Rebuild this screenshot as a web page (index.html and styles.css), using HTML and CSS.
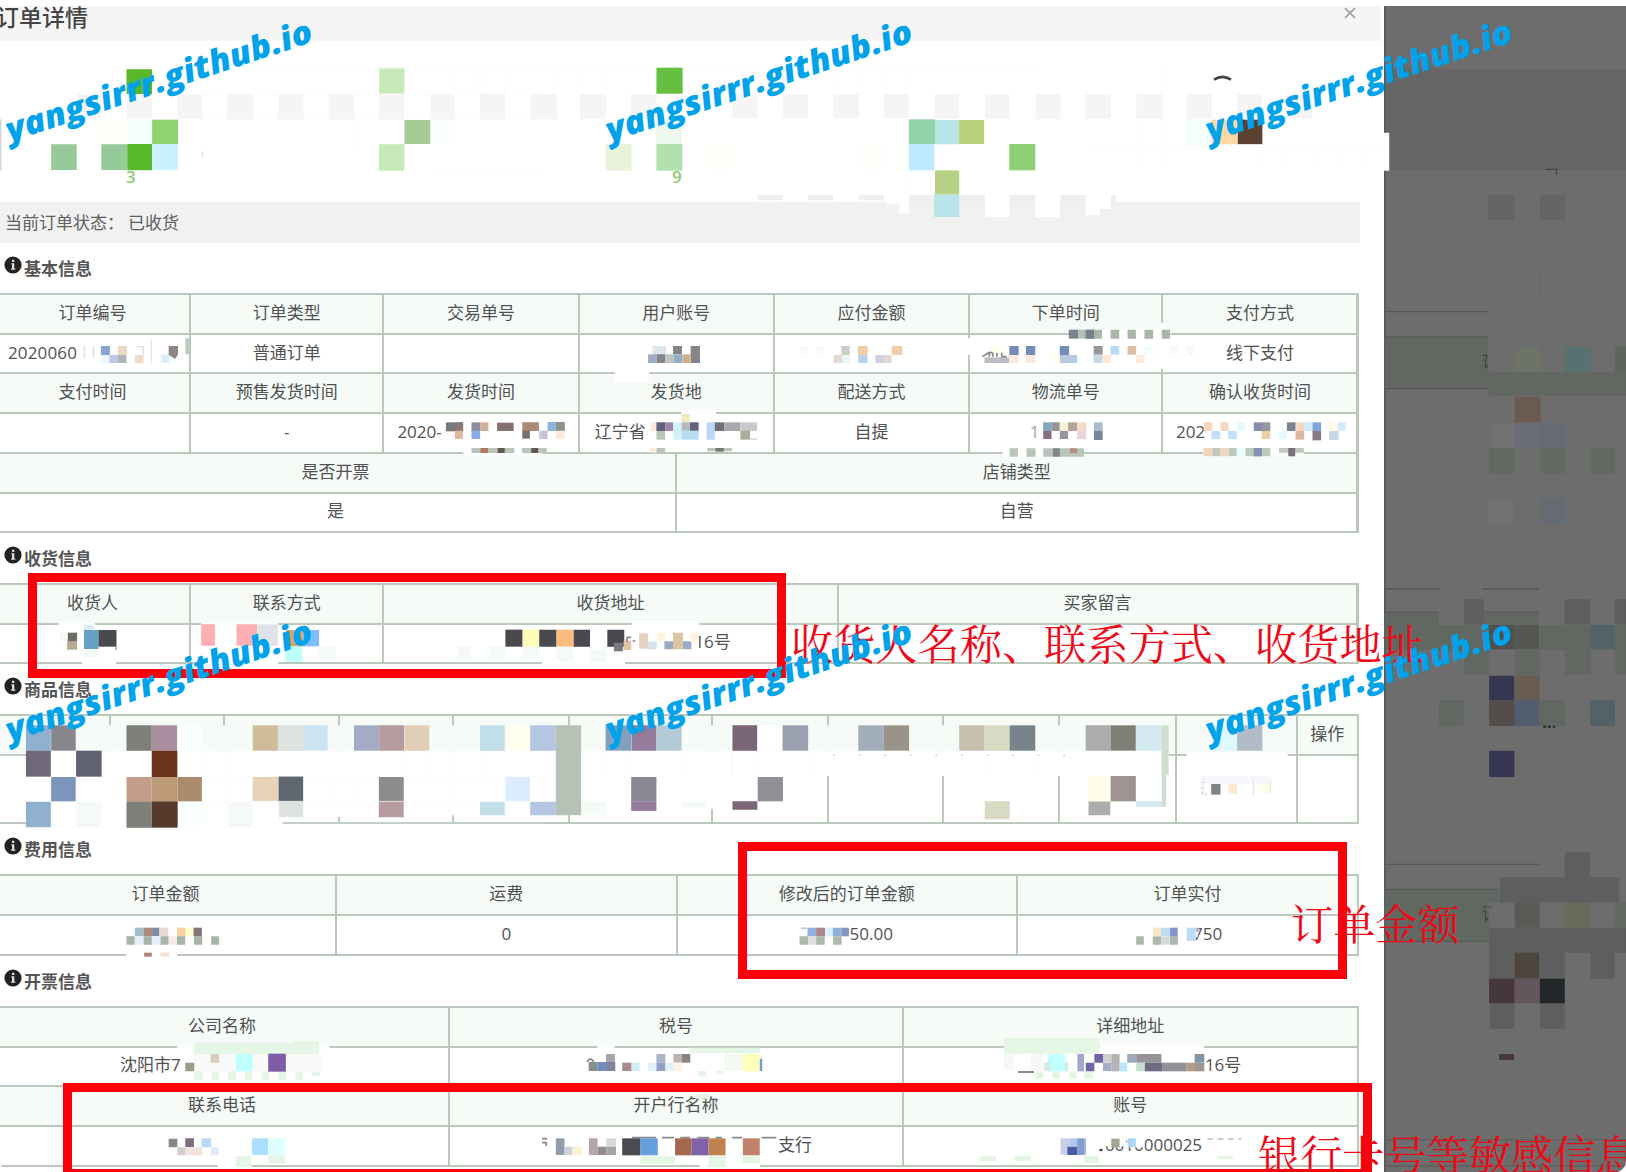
FILE: index.html
```html
<!DOCTYPE html>
<html lang="zh-CN">
<head>
<meta charset="utf-8">
<title>订单详情</title>
<link rel="stylesheet" href="styles.css">
</head>
<body>
<svg class="defs" width="0" height="0"><symbol id="info" viewBox="0 0 18 18"><circle cx="9" cy="9" r="8.6" fill="#222"/><path d="M7.3 7.3h3v5.2h1v1.3H7v-1.3h1V8.6h-.7zM8 3.8h2.3v2.2H8z" fill="#ddd"/></symbol></svg>
<div class="screen">
<main class="modal">
  <header class="modal-head"><h1>订单详情</h1><svg class="close" viewBox="0 0 12 12"><path d="M1 1l10 10M11 1L1 11" stroke="#999" stroke-width="1.7"/></svg></header>
  <div class="steps"><span class="step s1">3</span><span class="step s2">9</span></div>
  <div class="status"><span>当前订单状态：</span><span>已收货</span></div>

  <h2><svg><use href="#info"/></svg>基本信息</h2>
  <div class="grid basic">
    <b>订单编号</b><b>订单类型</b><b>交易单号</b><b>用户账号</b><b>应付金额</b><b>下单时间</b><b>支付方式</b>
    <i class="l p-no">2020060</i><i>普通订单</i><i></i><i></i><i></i><i></i><i>线下支付</i>
    <b>支付时间</b><b>预售发货时间</b><b>发货时间</b><b>发货地</b><b>配送方式</b><b>物流单号</b><b>确认收货时间</b>
    <i></i><i>-</i><i class="l p-send">2020-</i><i class="l p-from">辽宁省</i><i>自提</i><i class="l p-ship">1</i><i class="l p-recv">202</i>
  </div>
  <div class="grid extra"><b>是否开票</b><b>店铺类型</b><i>是</i><i>自营</i></div>

  <h2><svg><use href="#info"/></svg>收货信息</h2>
  <div class="grid receive">
    <b>收货人</b><b>联系方式</b><b>收货地址</b><b>买家留言</b>
    <i></i><i></i><i class="l p-addr">16号</i><i></i>
  </div>

  <h2><svg><use href="#info"/></svg>商品信息</h2>
  <div class="grid goods">
    <b></b><b></b><b></b><b></b><b></b><b></b><b></b><b></b><b></b><b></b><b></b><b>操作</b>
    <i></i><i></i><i></i><i></i><i></i><i></i><i></i><i></i><i></i><i></i><i></i><i></i>
  </div>

  <h2><svg><use href="#info"/></svg>费用信息</h2>
  <div class="grid fee">
    <b>订单金额</b><b>运费</b><b>修改后的订单金额</b><b>订单实付</b>
    <i></i><i>0</i><i class="l p-amount">50.00</i><i class="l p-paid">750</i>
  </div>

  <h2><svg><use href="#info"/></svg>开票信息</h2>
  <div class="grid invoice">
    <b>公司名称</b><b>税号</b><b>详细地址</b>
    <i class="l p-city">沈阳市7</i><i></i><i class="l p-full">16号</i>
    <b>联系电话</b><b>开户行名称</b><b>账号</b>
    <i></i><i class="l p-bank">支行</i><i class="l p-acct">0010000025</i>
  </div>
</main>
<aside class="backdrop"></aside>

<svg class="layer" viewBox="0 0 1626 1172" preserveAspectRatio="none">
<!-- progress steps, left -->
<g transform="scale(.34566 .33333)">
<path fill="#d4d4d4" d="M0 358h4v154H0z"/>
<path fill="#f5f5f5" d="M222 282h72v76h-72zM366 282h74v76h-74zM512 282h72v76h-72zM658 282h75v76h-75zM805 282h73v76h-73zM951 282h73v76h-73zM1097 282h72v76h-72zM1245 282h70v76h-70zM1389 282h73v76h-73zM1534 282h76v76h-76z"/>
<path fill="#57b82c" d="M366 208h74v74h-74zM368 432h72v79h-72z"/>
<path fill="#90d36e" d="M440 359h75v73h-75z"/><path fill="#96ca98" d="M148 433h74v77h-74zM293 433h75v77h-75z"/>
<path fill="#ccf1fe" d="M440 432h75v79h-75z"/><path fill="#f5fffe" d="M368 359h72v73h-72z"/><path fill="#fffef8" d="M295 359h72v73h-72z"/>
<path fill="#c7e9b7" d="M1097 203h73v78h-73zM1096 433h74v79h-74z"/><path fill="#a7cb95" d="M1170 360h75v72h-75z"/><path fill="#f9feff" d="M1246 360h69v72h-69z"/>
<path fill="#d9f2cc" d="M583 455h5v20h-5z"/>
<path fill="none" stroke="#f9f9f9" stroke-width="2" d="M586 206H1568M586 282H1568M586 358H1568M1026 359v95M1245 508H1568M1315 206v76M1389 206v76M1462 206v76"/>
</g>
<!-- progress steps, middle -->
<g transform="translate(542 0) scale(.34566 .33333)">
<path fill="#f5f5f5" d="M110 282h76v76h-76zM258 282h73v76h-73zM550 282h73v73h-73zM697 282h72v73h-72zM842 282h75v73h-75zM989 282h72v73h-72zM1135 282h72v76h-72zM1282 282h71v76h-71zM1428 282h72v76h-72zM0 282h42v76H0z"/>
<path fill="#67bf41" d="M331 203h76v78h-76z"/><path fill="#edf9ee" d="M331 358h74v74h-74z"/><path fill="#b1e2ad" d="M331 432h75v80h-75z"/><path fill="#e9f3dc" d="M184 432h75v80h-75z"/><path fill="#fffffa" d="M477 432h73v78h-73zM918 432h70v78h-70z"/>
<path fill="#90d4a8" d="M1061 358h76v75h-76z"/><path fill="#b9e5ea" d="M1137 360h69v73h-69z"/><path fill="#bbd27c" d="M1206 360h73v72h-73z"/><path fill="#bee9fe" d="M1061 433h74v78h-74z"/><path fill="#8ed073" d="M1352 432h75v79h-75z"/>
<path fill="#efefef" d="M623 585h74v16h-74zM770 585h73v16h-73zM916 585h73v16h-73zM1061 585h220v40h-220zM1353 585h75v40h-75zM1500 585h76v40h-76z"/>
<path fill="#fff" d="M995 602h39v11h-39zM1034 600h27v39h-27zM1282 585h70v67h-70zM1428 585h70v67h-70z"/>
<path fill="#b7d285" d="M1137 511h70v73h-70z"/><path fill="#b9e5ea" d="M1134 584h73v67h-73z"/>
<path fill="none" stroke="#fafafa" stroke-width="2" d="M0 206H331M407 206H1440M42 206v76M110 206v76M186 206v76M842 206v76M915 206v76M988 206v76M1061 206v76M1061 511v74"/>
</g>
<!-- progress steps, right -->
<g transform="translate(1084 0) scale(.34566 .33333)">
<path fill="#f5f5f5" d="M5 282h73v76H5zM151 282h75v76h-75zM297 282h73v76h-73zM443 282h72v76h-72zM588 282h73v74h-73z"/>
<path fill="#f2fffb" d="M296 359h74v74h-74z"/><path fill="#ffd8a5" d="M370 359h75v74h-75z"/><path fill="#5a402e" d="M445 359h71v74h-71z"/>
<path d="M376 239q25-17 49 0" fill="none" stroke="#444" stroke-width="8"/>
<path fill="#fff" d="M5 585h73v42H45v18H5zM864 398h19v114h-19z"/>
<path fill="#efefef" d="M78 585h14v24H78z"/>
<path fill="none" stroke="#f9f9f9" stroke-width="2" d="M5 434H864M151 282v228M226 206v304M515 433v75M588 433v75M661 433v75M733 433v75M806 433v75"/>
<path fill="#646464" d="M1170 585h74v76h-74zM1320 585h72v76h-72z"/>
<path fill="none" stroke="#6a6a6a" stroke-width="2" d="M1170 737h150M1246 585v300M1200 815h120v75"/>
<path fill="none" stroke="#445" stroke-width="4" d="M1335 508h30M1367 505v20"/>
</g>
<!-- basic info, left -->
<g transform="translate(0 290) scale(.34566 .33333)">
<path fill="#fff" d="M222 145h325v80H222z"/><path fill="#dcdee1" d="M242 168h4v36h-4zM268 168h4v36h-4zM396 168h20v4h-20zM412 168h4v28h-4zM436 150h3v70h-3z"/>
<path fill="#8aa2cf" d="M292 168h26v27h-26z"/><path fill="#bcc8e4" d="M316 195h25v24h-25z"/><path fill="#b2b3c0" d="M341 195h25v24h-25z"/><path fill="#e9d9c2" d="M341 168h26v27h-26z"/><path fill="#eddaca" d="M390 195h25v24h-25z"/><path fill="#dbeffe" d="M466 193h24v25h-24z"/><path fill="#8d8581" d="M488 168h27v25l-8 14-19-12z"/><path fill="#eaf8fa" d="M292 195h24v24h-24z"/><path fill="#bdcbbf" d="M536 145h12v48h-12z"/>
<path fill="#fff" d="M1290 395h278v102h-228v-20h-50z"/>
<path fill="#767d78" d="M1290 397h50v27h-50z"/><path fill="#8c7676" d="M1316 397h22v27h-22z"/><path fill="#dfb79b" d="M1316 422h23v25h-23z"/>
<path fill="#8a8fa0" d="M1364 397h26v26h-26z"/><path fill="#d0b09b" d="M1390 397h23v26h-23z"/><path fill="#85ade0" d="M1364 422h25v25h-25z"/><path fill="#866f72" d="M1438 398h48v25h-48z"/><path fill="#ab8b78" d="M1511 397h28v26h-28zM1539 397h20v26h-20z"/><path fill="#766e72" d="M1511 422h22v24h-22z"/><path fill="#c9d0d8" d="M1559 422h9v26h-9z"/>
<path fill="#b9c5ba" d="M1364 474h124v15h-124zM1510 474h58v15h-58z"/><path fill="#b4795e" d="M1390 474h22v15h-22z"/><path fill="#635754" d="M1440 474h20v15h-20zM1537 474h20v15h-20z"/>
</g>
<!-- basic info, middle -->
<g transform="translate(542 290) scale(.34566 .33333)">
<path fill="#fff" d="M210 244h100v33H210zM1226 145h18v50h-18zM403 362h100v20H403z"/>
<path fill="#dbe7ea" d="M320 168h39v27h-39z"/><path fill="#9eabc9" d="M307 193h25v26h-25z"/><path fill="#858489" d="M332 193h25v26h-25zM379 168h26v25h-26zM430 168h27v51h-27z"/><path fill="#bcc7c0" d="M357 193h23v26h-23z"/><path fill="#95b1bf" d="M380 193h26v26h-26z"/><path fill="#ceb08e" d="M406 193h24v26h-24z"/>
<path fill="#c8cfc6" d="M866 168h24v27h-24z"/><path fill="#e4d6d1" d="M844 195h24v24h-24zM989 195h22v24h-22z"/><path fill="#ebf5f7" d="M868 195h24v24h-24z"/><path fill="#f1ceaa" d="M914 168h28v27h-28zM1012 168h30v27h-30z"/><path fill="#b9d2f0" d="M915 195h27v24h-27z"/><path fill="#d1d0de" d="M964 195h25v24h-25z"/><path fill="#f7faf7" d="M748 168h20v26h-20zM795 168h22v26h-22z"/>
<path fill="#b9bec5" d="M1280 202h71v17h-71z"/><path fill="none" d="M1274 200l22-14M1294 200v-12h10v12M1316 188v12M1330 188v12h14" stroke="#888" stroke-width="5"/><path fill="#758bb8" d="M1352 168h27v27h-27zM1400 168h27v27h-27zM1498 168h27v27h-27z"/><path fill="#f9eadd" d="M1352 195h27v24h-27zM1400 195h27v24h-27z"/><path fill="#b5cae0" d="M1498 195h50v24h-50z"/><path fill="#ffffe9" d="M1304 168h24v20h-24zM1475 193h23v26h-23z"/>
<path fill="#7b838f" d="M1524 119h27v27h-27z"/><path fill="#b6c1b6" d="M1551 119h17v27h-17z"/>
<path fill="#8cb4dc" d="M16 396h24v27H16z"/><path fill="#8e918a" d="M40 396h26v27H40z"/><path fill="#c0bfd6" d="M0 422h16v25H0z"/><path fill="#ffe9d9" d="M40 422h26v25H40zM314 397h17v26h-17z"/>
<path fill="#efe8bb" d="M404 372h23v26h-23z"/><path fill="#62607b" d="M331 397h26v26h-26zM428 397h25v26h-25z"/><path fill="#a086a5" d="M357 397h23v26h-23z"/><path fill="#b9c6b8" d="M331 423h25v26h-25z"/><path fill="#d2f2fb" d="M380 397h24v52h-24z"/><path fill="#b8b8bc" d="M404 397h24v25h-24z"/><path fill="#b4dcf3" d="M404 422h49v27h-49z"/><path fill="#b9d8fa" d="M476 397h24v52h-24z"/><path fill="#706f77" d="M500 397h27v26h-27z"/><path fill="#a8a9af" d="M527 397h47v26h-47z"/><path fill="#c9c8ca" d="M574 397h48v26h-48z"/><path fill="#abad9d" d="M574 422h28v27h-28z"/><path fill="#d9d9d9" d="M602 445h20v5h-20z"/>
<path fill="#b9c5ba" d="M0 474h14v14H0zM478 474h72v10h-72zM331 474h25v13h-25z"/><path fill="#fcebdd" d="M312 474h19v14h-19z"/><path fill="#7b777e" d="M502 474h24v11h-24z"/>
<path fill="#82a4bd" d="M1450 397h24v26h-24z"/><path fill="#97959c" d="M1474 397h24v26h-24zM1498 423h24v24h-24z"/><path fill="#f7f4d5" d="M1498 397h24v26h-24z"/><path fill="#b6a39a" d="M1522 397h26v26h-26z"/><path fill="#f5dbcb" d="M1548 397h20v26h-20z"/><path fill="#84707c" d="M1450 423h24v24h-24z"/><path fill="#e7d4d7" d="M1548 423h20v24h-20z"/>
<path fill="#fff" d="M1332 472h236v28h-236z"/><path fill="#b9c5ba" d="M1353 475h24v25h-24zM1402 475h26v25h-26zM1450 475h118v25h-118z"/><path fill="#82858a" d="M1478 475h20v25h-20z"/><path fill="#b68e7e" d="M1528 475h20v14h-20z"/>
</g>
<!-- basic info, right and backdrop -->
<g transform="translate(1084 290) scale(.34566 .33333)">
<path fill="#fff" d="M0 118h250v27H0zM220 98h16v138h-16z"/><path fill="#a8b6a7" d="M0 119h52v27H0zM77 119h25v27H77zM126 119h24v27h-24zM175 119h25v27h-25zM225 119h24v27h-24z"/><path fill="#76818f" d="M5 119h24v27H5z"/>
<path fill="#97969d" d="M28 168h26v26H28z"/><path fill="#c8d8e4" d="M28 194h26v25H28z"/><path fill="#b7dbfb" d="M77 168h25v26H77z"/><path fill="#debea6" d="M126 168h25v26h-25z"/><path fill="#fbebda" d="M151 194h24v25h-24zM54 194h24v25H54z"/><path fill="#effefe" d="M175 168h25v26h-25z"/><path fill="#f8f8f8" d="M248 168h22v26h-22zM297 168h20v26h-20z"/>
<path fill="#a9bdd0" d="M29 397h25v26H29z"/><path fill="#75869a" d="M29 423h25v27H29z"/><path fill="#f1d6c7" d="M0 397h6v26H0z"/><path fill="#e7d4d7" d="M0 423h6v25H0z"/>
<path fill="#f5d7c2" d="M346 397h25v26h-25zM395 397h23v26h-23zM614 397h23v26h-23z"/><path fill="#c3e0fb" d="M369 423h25v24h-25zM417 423h25v24h-25z"/><path fill="#e4fbfd" d="M443 397h22v26h-22zM564 423h22v24h-22z"/><path fill="#8390ac" d="M491 397h24v26h-24z"/><path fill="#97979d" d="M515 397h24v26h-24z"/><path fill="#edcda4" d="M514 423h25v24h-25z"/><path fill="#7f8193" d="M587 397h25v26h-25z"/><path fill="#dbb6a1" d="M612 423h25v26h-25z"/><path fill="#d0eafe" d="M637 397h24v26h-24zM735 397h22v26h-22z"/><path fill="#7da8d8" d="M661 397h25v26h-25z"/><path fill="#887984" d="M661 423h25v28h-25z"/><path fill="#fffbe7" d="M709 397h26v26h-26z"/><path fill="#cad8e5" d="M709 423h28v27h-28z"/>
<path fill="#fff" d="M345 474h290v26H345z"/><path fill="#bec9be" d="M371 474h24v25h-24zM418 474h24v25h-24zM467 474h72v25h-72zM564 474h72v14h-72z"/><path fill="#f1d5c1" d="M346 474h25v25h-25zM395 474h23v25h-23z"/><path fill="#8593b3" d="M491 474h24v25h-24z"/><path fill="#74717b" d="M591 474h20v25h-20z"/><path fill="#e6ffff" d="M443 474h22v25h-22z"/>
<path stroke="#585858" stroke-width="4" d="M870 65h300"/><path fill="#626861" d="M870 140h300v156H870zM1170 247h398v70h-398z"/><path stroke="#575b57" stroke-width="4" d="M870 141h300M870 296h300"/>
<path d="M1154 195l10 3M1154 210h8v24l7-8M1165 193v15" stroke="#3a3a3a" stroke-width="3" fill="none"/>
<path fill="#6d7367" d="M1246 170h74v76h-74z"/><path fill="#577170" d="M1391 170h75v76h-75z"/><path fill="#5f655e" d="M1536 170h32v76h-32z"/><path fill="#6a5a51" d="M1246 320h75v78h-75z"/><path fill="#6a6d75" d="M1246 398h75v76h-75z"/><path fill="#646b72" d="M1321 398h70v76h-70zM1320 624h71v76h-71z"/><path fill="#717171" d="M1172 398h74v76h-74zM1170 624h73v76h-73z"/><path fill="#626960" d="M1172 474h73v76h-73zM1320 474h71v76h-71zM1466 474h70v76h-70z"/>
<path stroke="#5b5b5b" stroke-width="4" d="M870 897h157M1153 897h163"/>
</g>
<!-- receiver and goods, left -->
<g transform="translate(0 580) scale(.34566 .33333)">
<path fill="#fff" d="M170 128h105v10H170zM238 245h98v10h-98z"/><path fill="#6f6b68" d="M196 158h27v27h-27z"/><path fill="#b6aa91" d="M194 185h29v24h-29z"/><path fill="#dbebf4" d="M243 135h28v15h-28z"/><path fill="#66a1c4" d="M243 150h42v57h-42z"/><path fill="#4a494f" d="M285 150h52v50h-52z"/><path fill="#f4f9f3" d="M174 155h20v27h-20zM243 209h42v23h-42z"/><path d="M336 200v10" stroke="#89b5cc" stroke-width="5"/>
<path fill="#fff" d="M582 128h223v130H582z"/><path fill="#ffafb3" d="M582 133h40v64h-40zM684 133h60v64h-60z"/><path fill="#e0e2eb" d="M744 133h60v64h-60z"/><path fill="#d7a468" d="M828 150h48v50h-48z"/><path fill="#82bdff" d="M876 150h47v49h-47z"/><path fill="#bffff9" d="M825 199h49v47h-49z"/><path fill="#f4faf5" d="M924 199h48v36h-48zM1326 198h37v36h-37zM1414 198h48v36h-48zM1512 198h48v36h-48z"/>
<path fill="#4a494f" d="M1462 149h50v51h-50z"/><path fill="#fffbb8" d="M1512 149h48v51h-48z"/><path fill="#4a494f" d="M1560 149h8v51h-8z"/>
<path fill="#fff" d="M75 512h1493v200H820v26H75z"/>
<path fill="#f6fbf7" d="M315 436h1253v76H315z"/>
<path stroke="#c3cec4" stroke-width="6" d="M0 525h75M818 729h750M981 712v17M1311 706v23"/>
<path fill="#8fb0ce" d="M75 436h72v76H75zM75 665h72v77H75z"/><path fill="#86868d" d="M148 436h71v76h-71z"/><path fill="#706878" d="M75 512h72v78H75z"/><path fill="#606273" d="M220 512h74v78h-74z"/><path fill="#7c95bd" d="M148 591h71v73h-71z"/><path fill="#f6faf6" d="M220 665h73v76h-73zM658 665h73v76h-73z"/>
<path fill="#7e7f78" d="M366 436h73v76h-73zM366 664h73v79h-73z"/><path fill="#a88e9e" d="M439 436h74v76h-74z"/><path fill="#f9ffff" d="M513 436h70v76h-70zM514 664h70v76h-70z"/><path fill="#6b341b" d="M439 512h74v79h-74z"/><path fill="#c49e8a" d="M366 591h73v73h-73z"/><path fill="#bc9977" d="M439 591h75v73h-75z"/><path fill="#ab8b6c" d="M514 591h70v73h-70z"/><path fill="#563a2b" d="M439 664h75v79h-75z"/>
<path fill="#cdbb99" d="M731 436h73v76h-73z"/><path fill="#dee2df" d="M804 436h75v76h-75zM807 664h70v48h-70z"/><path fill="#cce4f2" d="M879 436h69v76h-69z"/><path fill="#e7d3b8" d="M731 591h75v73h-75z"/><path fill="#5e666f" d="M806 588h71v76h-71z"/>
<path fill="#a2acc5" d="M1024 436h73v76h-73z"/><path fill="#b69ca0" d="M1097 436h72v76h-72zM1096 664h72v48h-72z"/><path fill="#e1ceb6" d="M1170 436h72v76h-72z"/><path fill="#8b8c8e" d="M1096 591h72v73h-72z"/><path fill="#c2dee9" d="M1389 436h71v76h-71zM1389 665h71v41h-71z"/><path fill="#fffeef" d="M1462 436h71v76h-71z"/><path fill="#b5c6e2" d="M1534 436h34v76h-34zM1534 665h34v41h-34z"/><path fill="#dcecff" d="M1462 591h71v73h-71z"/>
<path stroke="#f7faf8" stroke-width="2" fill="none" d="M586 512v78M658 512v150M950 590v74M1024 590v74M1168 512v78M1243 512v78M1311 512v152M1389 512v78M586 589h982M586 664h982"/>
</g>
<!-- receiver and goods, middle -->
<g transform="translate(542 580) scale(.34566 .33333)">
<path fill="#fff" d="M0 244h240v10H0zM260 126h195v12H260z"/><path fill="#4a494f" d="M0 149h42v51H0zM91 149h48v51H91zM189 149h49v51h-49z"/><path fill="#fcbc7d" d="M42 149h49v51H42z"/><path fill="#f4faf5" d="M42 200h48v46H42zM140 207h48v40h-48z"/><path fill="#777a7c" d="M208 188h26v26h-26z"/><path fill="#dfc4a4" d="M236 182h22v28h-22zM379 158h29v50h-29z"/><path fill="#e4d1be" d="M281 160h26v46h-26z"/><path fill="#d7e1ef" d="M307 185h25v23h-25z"/><path fill="#9aabc5" d="M354 184h25v24h-25zM408 184h24v24h-24z"/><path fill="#fff5df" d="M332 158h25v26h-25zM429 160h25v25h-25z"/>
<path fill="none" stroke="#8a8a8a" stroke-width="5" d="M244 172h14M246 172v14M262 183h8"/>
<path fill="#fff" d="M0 512h1568v76H0zM480 588h20v98h-20z"/><path fill="#f6fbf7" d="M0 436h1568v76H0z"/>
<path fill="#b6c5e2" d="M0 436h40v76H0zM0 665h40v41H0z"/><path fill="#b6c2b5" d="M40 436h73v270H40z"/><path fill="#839fbe" d="M184 436h74v76h-74z"/><path fill="#967c9b" d="M259 436h72v76h-72zM258 664h73v29h-73z"/><path fill="#b3cbd6" d="M331 436h73v76h-73z"/><path fill="#898794" d="M258 591h73v73h-73z"/><path fill="#f5faf6" d="M113 665h72v41h-72zM406 665h70v20h-70z"/>
<path fill="#7a6676" d="M551 436h72v76h-72zM551 664h72v25h-72z"/><path fill="#fff" d="M623 436h73v76h-73z"/><path fill="#9aa0b0" d="M696 436h74v76h-74z"/><path fill="#909197" d="M624 591h73v73h-73z"/><path fill="#a1adb9" d="M915 436h74v76h-74z"/><path fill="#999389" d="M989 436h73v76h-73z"/><path fill="#c6bfae" d="M1207 436h73v76h-73z"/><path fill="#d8dac4" d="M1280 436h73v76h-73zM1281 664h72v54h-72z"/><path fill="#77848b" d="M1353 436h74v76h-74z"/>
<path stroke="#f7faf8" stroke-width="2" fill="none" d="M186 512v76M258 512v76M406 512v76M551 512v76M623 512v76M770 512v76M1280 512v76M1427 512v76"/><path stroke="#bdc9bd" stroke-width="4" stroke-dasharray="5 69" d="M842 526H1568"/>
</g>
<!-- goods, right and backdrop -->
<g transform="translate(1084 580) scale(.34566 .33333)">
<path fill="#fff" d="M0 510h245v76H0zM297 518h292v14H297z"/><path fill="#adacab" d="M5 436h72v76H5zM13 664h63v42H13z"/><path fill="#807f76" d="M77 436h73v76H77z"/><path fill="#d4e8f0" d="M150 436h74v76h-74zM151 664h81v17h-81z"/><path fill="#d0ddd0" d="M224 436h21v148h-21zM225 584h13v96h-13z"/><path fill="#fffeea" d="M13 588h64v76H13z"/><path fill="#9f9490" d="M77 588h73v76H77z"/><path fill="#f5faf7" d="M297 436h290v76H297z"/><path fill="#dff8ff" d="M370 436h73v76h-73z"/><path fill="#b0bdc8" d="M443 436h73v76h-73z"/>
<path fill="#7e8584" d="M368 612h27v32h-27z"/><path fill="#fbe8d1" d="M418 612h25v30h-25z"/><path fill="#ffffe9" d="M515 612h24v30h-24z"/><path fill="#f6f7fb" d="M345 588h195v23H345z"/><path fill="none" stroke="#bbb" stroke-width="4" stroke-dasharray="4 12" d="M341 605v38h26"/><path stroke="#dfe7e1" stroke-width="3" d="M345 588v57M490 600v45M540 600v40"/>
<path fill="#616761" d="M870 96h157v37H870zM1157 96h159v39h-159zM1027 135h145v75h-145zM1100 210h72v75h-72zM1246 210h72v75h-72zM1320 135h145v75h-145zM1391 210h74v75h-74zM1536 135h32v150h-32zM1027 360h71v78h-71zM1320 360h71v78h-71zM870 133h157v77H870z"/><path stroke="#595959" stroke-width="4" d="M870 26h157M1153 26h163M870 97h157M1157 97h159M870 853h446"/><path fill="#5e5e5e" d="M1100 58h57v75h-57zM1391 58h73v75h-73zM1536 58h32v75h-32zM1391 816h73v84h-73zM1208 892h340v8h-340z"/>
<path fill="#51504e" d="M1172 135h72v73h-72z"/><path fill="#555852" d="M1244 135h73v73h-73z"/><path fill="#526267" d="M1464 135h72v73h-72zM1464 360h72v78h-72z"/><path fill="#373650" d="M1172 287h73v73h-73zM1172 512h73v79h-73z"/><path fill="#685c53" d="M1246 287h72v73h-72z"/><path fill="#544d4c" d="M1172 360h74v78h-74z"/><path fill="#525d6d" d="M1246 360h72v78h-72z"/><path stroke="#2a2a2a" stroke-width="6" stroke-dasharray="9 5" d="M1328 440h36"/>
</g>
<!-- fees and invoice, left -->
<g transform="translate(0 872) scale(.34566 .33333)">
<path fill="#a2becb" d="M390 167h25v26h-25z"/><path fill="#af897b" d="M415 167h25v26h-25z"/><path fill="#7d8ba4" d="M440 167h21v26h-21z"/><path fill="#ead8d2" d="M462 167h25v26h-25z"/><path fill="#f8d0a1" d="M512 167h25v26h-25z"/><path fill="#fffec8" d="M537 167h22v26h-22z"/><path fill="#85747a" d="M560 167h24v26h-24z"/><path fill="#a6b5a7" d="M366 193h24v25h-24zM415 193h24v25h-24zM464 193h24v25h-24zM512 193h24v25h-24zM561 193h24v25h-24zM611 193h23v25h-23z"/><path fill="#e6effb" d="M390 193h25v25h-25zM440 193h24v25h-24z"/><path fill="#f6e9e4" d="M488 193h24v25h-24z"/><path fill="#fff" d="M366 242h147v14H366z"/><path fill="#b48073" d="M417 242h22v12h-22z"/><path fill="#f3e1d7" d="M464 242h26v12h-26z"/>
<path fill="#fff" d="M513 518h440v14H513z"/><path fill="#e5f5e6" d="M561 512h284v-5h78v39H561zM561 598h25v25h-25zM611 598h22v25h-22zM660 598h22v25h-22zM709 598h22v25h-22zM757 598h22v25h-22zM806 598h22v25h-22zM855 598h22v25h-22zM904 598h22v15h-22z"/><path fill="#f7faf7" d="M561 546h370v52H561z"/><path fill="#999e87" d="M536 572h26v26h-26z"/><path fill="#dacdb9" d="M609 546h25v26h-25z"/><path fill="#bfffff" d="M682 546h49v52h-49z"/><path fill="#7e5ca8" d="M776 545h51v54h-51z"/>
<path fill="#87888f" d="M488 800h25v26h-25z"/><path fill="#796e7a" d="M536 799h25v26h-25z"/><path fill="#d1cdd1" d="M513 826h24v24h-24z"/><path fill="#f3e2dc" d="M537 826h48v24h-48z"/><path fill="#bad9f8" d="M583 799h28v27h-28z"/><path fill="#e2eafa" d="M611 826h22v24h-22z"/><path fill="#abdeff" d="M729 799h47v50h-47z"/><path fill="#ddffff" d="M776 799h49v52h-49z"/><path fill="#fff" d="M630 851h98v36h-98z"/><path fill="#e6f5e5" d="M682 851h45v34h-45zM776 851h49v24h-49z"/>
</g>
<!-- fees and invoice, middle -->
<g transform="translate(542 872) scale(.34566 .33333)">
<path fill="#9da0a5" d="M750 167h18v3h-18z"/><path fill="#8fb1de" d="M768 167h25v26h-25zM840 167h26v26h-26z"/><path fill="#aa8689" d="M793 167h26v26h-26z"/><path fill="#d8f0fd" d="M819 167h22v26h-22z"/><path fill="#8498bd" d="M866 167h22v26h-22z"/><path fill="#adb9ad" d="M745 193h25v25h-25zM793 193h25v25h-25zM842 193h25v25h-25z"/><path fill="#e0dfdf" d="M770 193h23v25h-23z"/>
<path fill="#fff" d="M160 518h50v14h-50zM1336 518h232v14h-232z"/><path fill="#e5f6e5" d="M430 527h200v17H430zM1337 498h231v47h-231zM452 597h24v15h-24zM504 597h20v10h-20zM443 665h43v15h-43z"/><path fill="#858f8b" d="M135 570h25v27h-25z"/><path d="M130 570q10-18 20 0" stroke="#777" fill="none" stroke-width="4"/><path fill="#708cbd" d="M160 570h25v27h-25z"/><path fill="#aaa3a8" d="M185 546h26v24h-26z"/><path fill="#8181a1" d="M185 570h27v27h-27z"/><path fill="#a98d8c" d="M232 572h27v25h-27z"/><path fill="#d0ecf4" d="M259 572h23v25h-23z"/><path fill="#aab4c6" d="M331 546h26v26h-26z"/><path fill="#8f9fc5" d="M331 572h26v25h-26z"/><path fill="#bbb1ae" d="M380 546h25v26h-25z"/><path fill="#8b8482" d="M405 546h24v26h-24z"/><path fill="#fff3e5" d="M380 572h25v25h-25z"/><path fill="#dff0fb" d="M357 572h23v25h-23zM307 572h23v25h-23z"/><path fill="#f4f9f4" d="M527 546h54v50h-54zM1337 545h28v50h-28zM1415 546h35v50h-35z"/><path fill="#ffffba" d="M581 546h49v52h-49z"/><path fill="#6da2c7" d="M630 560h7v37h-7z"/><path d="M1377 600h46" stroke="#888" stroke-width="6"/><path fill="#bfffff" d="M1464 546h48v52h-48z"/><path fill="#d2ebe4" d="M1453 570h20v28h-20zM1512 570h10v28h-10z"/><path fill="#a4a6cb" d="M1549 546h19v52h-19z"/><path fill="#e5f6e5" d="M1428 598h22v22h-22zM1477 598h22v22h-22zM1525 598h22v22h-22z"/>
<path fill="none" stroke="#888" stroke-width="5" d="M0 800h15M0 812h12v10M260 797h70M347 797h35M400 797h28M450 797h34M502 797h18M550 797h30M635 797h43"/>
<path fill="#919caf" d="M40 799h25v50H40z"/><path fill="#cfd1d8" d="M65 824h23v25H65z"/><path fill="#fff0d4" d="M89 824h26v25H89z"/><path fill="#b5a5a8" d="M136 799h25v50h-25z"/><path fill="#928d96" d="M161 824h25v25h-25z"/><path fill="#d6d9d6" d="M186 799h28v25h-28z"/><path fill="#a1a7a5" d="M186 824h28v25h-28z"/><path fill="#4a4b50" d="M232 799h53v51h-53z"/><path fill="#659fe0" d="M285 799h50v51h-50z"/><path fill="#a6674f" d="M385 799h48v51h-48z"/><path fill="#8062a8" d="M433 799h49v51h-49z"/><path fill="#c08250" d="M482 799h49v51h-49z"/><path fill="#c1806a" d="M581 799h49v51h-49z"/><path fill="#e5f6e5" d="M285 851h100v25H285zM482 851h49v34h-49zM581 851h50v30h-50zM1266 851h48v16h-48zM1366 851h49v16h-49z"/><path fill="#fff" d="M456 874h25v14h-25zM531 874h100v14H531z"/><path fill="#c8cee7" d="M1500 799h26v49h-26z"/><path fill="#acc8ec" d="M1526 799h22v24h-22z"/><path fill="#495ba6" d="M1520 824h28v25h-28z"/><path fill="#859cce" d="M1548 799h20v50h-20z"/>
</g>
<!-- fees and invoice, right and backdrop -->
<g transform="translate(1084 872) scale(.34566 .33333)">
<path fill="#fff" d="M295 166h35v28h-35z"/><path fill="#adb9ad" d="M151 193h22v25h-22zM199 193h24v25h-24zM248 193h24v25h-24z"/><path fill="#f7e7c6" d="M199 167h24v26h-24z"/><path fill="#bddcf4" d="M223 167h26v26h-26zM297 167h26v40h-26z"/><path fill="#8397c7" d="M249 167h22v26h-22z"/><path fill="#d8d9dc" d="M223 193h25v25h-25z"/><path fill="#a9b5c4" d="M323 167h10v12h-10z"/>
<path fill="#fff" d="M45 518h303v14H45z"/><path fill="#e5f6e5" d="M0 498h44v47H0zM0 598h26v22H0zM0 851h43v22H0zM387 851h46v10h-46z"/><path fill="#7165aa" d="M5 572h25v26H5zM30 546h25v26H30z"/><path fill="#a3aeca" d="M55 572h24v25H55z"/><path fill="#d2cfcf" d="M55 546h24v26H55z"/><path fill="#b4b2b2" d="M79 546h24v52H79z"/><path fill="#bbe4ff" d="M103 572h22v26h-22z"/><path fill="#9cabb5" d="M125 546h26v26h-26z"/><path fill="#969298" d="M151 546h73v26h-73z"/><path fill="#c6ddd0" d="M151 572h25v26h-25z"/><path fill="#726a80" d="M176 572h50v26h-50z"/><path fill="#919096" d="M226 572h71v26h-71z"/><path fill="#b69b89" d="M297 572h24v26h-24z"/><path fill="#8195a7" d="M320 546h28v26h-28z"/><path fill="#9c9891" d="M321 572h27v26h-27z"/>
<path fill="#fff" d="M55 796h60v27H55zM125 796h50v30h-50z"/><path fill="#a8b5cd" d="M0 799h6v49H0z"/><path fill="#a4a594" d="M79 800h24v26H79z"/><path fill="#add7fa" d="M127 799h23v26h-23z"/><path stroke="#bbb" stroke-width="4" stroke-dasharray="16 14" d="M357 801h98"/><path d="M44 834h10" stroke="#555" stroke-width="7"/>
<path fill="#616761" d="M870 52h330v156H870zM1536 92h32v75h-32z"/><path stroke="#575b57" stroke-width="4" d="M870 52h330M870 208h300"/><path fill="#5e5e5e" d="M1203 18h345v74h-345zM1391 0h73v18h-73zM1172 167h396v75h-396zM1172 242h74v78h-74zM1320 242h71v78h-71zM1466 242h70v78h-70zM1174 395h71v75h-71zM1320 395h71v75h-71z"/><path fill="#6d6d6d" d="M1172 92h396v75h-396z"/><path fill="#575b54" d="M1246 92h72v75h-72z"/><path fill="#666b5c" d="M1391 92h73v75h-73z"/><path fill="#626960" d="M1536 92h32v75h-32z"/><path fill="#4c463e" d="M1246 242h72v78h-72z"/><path fill="#46373b" d="M1172 320h74v74h-74zM1201 546h43v18h-43z"/><path fill="#63565d" d="M1246 320h73v74h-73z"/><path fill="#222729" d="M1319 320h72v74h-72z"/><path d="M1154 105h12M1154 118h8v28l8-9M1172 105h8" stroke="#3a3a3a" stroke-width="3" fill="none"/><path stroke="#5d605d" stroke-width="4" d="M870 803h698M870 882h698"/>
</g>
</svg>

<div class="mark receiver"></div><div class="mark amount"></div><div class="mark account"></div>
<svg class="layer"><path fill="#fff" d="M201 664h56v5h-56z"/></svg>
<div class="note n1">收货人名称、联系方式、收货地址</div>
<div class="note n2">订单金额</div>
<div class="note n3">银行卡号等敏感信息</div>
<svg class="layer wm" viewBox="0 0 1626 1172">
<g transform="translate(10 142) rotate(-18.3)"><text textLength="321" lengthAdjust="spacingAndGlyphs">yangsirrr.github.io</text></g>
<g transform="translate(610 142) rotate(-18.3)"><text textLength="321" lengthAdjust="spacingAndGlyphs">yangsirrr.github.io</text></g>
<g transform="translate(1210 142) rotate(-18.3)"><text textLength="321" lengthAdjust="spacingAndGlyphs">yangsirrr.github.io</text></g>
<g transform="translate(10 742) rotate(-18.3)"><text textLength="321" lengthAdjust="spacingAndGlyphs">yangsirrr.github.io</text></g>
<g transform="translate(610 742) rotate(-18.3)"><text textLength="321" lengthAdjust="spacingAndGlyphs">yangsirrr.github.io</text></g>
<g transform="translate(1210 742) rotate(-18.3)"><text textLength="321" lengthAdjust="spacingAndGlyphs">yangsirrr.github.io</text></g>
</svg>
</div>
</body>
</html>
```

FILE: styles.css
```css
* { box-sizing: border-box; }
html, body { margin: 0; background: #fff; overflow: hidden; }
body { font: 17px/24px "Open Sans", "Noto Sans CJK SC", sans-serif; color: #505153; }
.defs { position: absolute; }
.screen { position: relative; display: flex; width: 1626px; height: 1172px; padding-top: 6px; overflow: hidden; border-radius: 0 0 11px 11px; }
.modal { width: 1384px; flex: none; height: 1166px; overflow: hidden; background: #fff; }
.backdrop { flex: 1; border-left: 2px solid #5b5b5b; background: linear-gradient(#6d6d6d 63px, #666 63px 164px, #6d6d6d 164px); }

.modal-head { display: flex; justify-content: space-between; align-items: flex-start; width: 1381px; height: 34.5px; padding-right: 25px; background: #f5f5f5; }
h1 { margin: -3px 0 0 -4px; font-size: 23px; line-height: 28px; font-weight: 500; color: #444; }
.close { width: 12px; height: 12px; margin-top: 1px; }
.steps { display: flex; height: 161.2px; padding: 124px 0 0 126px; }
.step { font-size: 17px; font-weight: 600; color: #8ccb70; }
.s1 { width: 546px; }
.status { display: flex; gap: 4px; width: 1359.5px; height: 41px; padding: 9px 0 0 5px; background: #f1f1f1; color: #606060; }

h2 { display: flex; height: 50.2px; margin: 0; padding: 14px 0 0 4px; font-size: 17px; line-height: 24px; font-weight: 700; color: #555; }
h2 svg { width: 18px; height: 18px; margin: -1px 2px 0 0; }

.grid { display: grid; gap: 2px; width: 1362.8px; margin-left: -4px; padding: 2px 2px 2px 0; background: #bcc8bc; }
.grid b, .grid i { display: flex; align-items: center; justify-content: center; min-width: 0; padding-bottom: 2px; font-weight: 400; font-style: normal; background: #fff; white-space: nowrap; }
.grid b { background: #f6fbf7; }
.grid .l { justify-content: flex-start; }
.basic { grid-template-columns: 193.2px 191.2px 193.3px 193.3px 192.9px 191.6px 193px; grid-template-rows: repeat(4, 1fr); height: 161px; }
.extra { grid-template-columns: 679.2px 679.3px; grid-template-rows: 1fr 1fr; height: 79.3px; padding-top: 0; }
.receive { grid-template-columns: 193.2px 191.2px 452.2px 517.9px; grid-template-rows: 1fr 1fr; height: 80.6px; }
.goods { grid-template-columns: 113px 112.3px 112.7px 112.2px 113.8px 140.7px 114.2px 113.4px 114.2px 114.1px 119.4px 58.8px; grid-template-rows: 37.7px 1fr; height: 109.9px; }
.fee { grid-template-columns: 339px 338.5px 338.5px 338.8px; grid-template-rows: 1fr 1fr; height: 81.4px; }
.invoice { grid-template-columns: 452px 451.9px 452.9px; grid-template-rows: repeat(4, 1fr); height: 161px; }

.grid .p-no { padding-left: 12px; letter-spacing: .15px; }
.grid .p-send { padding-left: 13px; }
.grid .p-from { padding-left: 15px; }
.grid .p-ship { padding-left: 60px; color: #b5a198; }
.grid .p-recv { padding-left: 12.5px; }
.grid .p-addr { padding-left: 310px; }
.grid .p-amount { padding-left: 172px; }
.grid .p-paid { padding-left: 175px; }
.grid .p-city { padding-left: 124px; }
.grid .p-full { padding-left: 301px; }
.grid .p-bank { padding-left: 328px; }
.grid .p-acct { padding-left: 201px; }

.layer { position: absolute; left: 0; top: 0; width: 1626px; height: 1172px; }
.mark { position: absolute; border: 9px solid #fe000c; }
.receiver { left: 28px; top: 573px; width: 758px; height: 105px; }
.amount { left: 738px; top: 842px; width: 609px; height: 137px; }
.account { left: 63px; top: 1083px; width: 1309px; height: 95px; }
.note { position: absolute; font: 400 42.2px/60px "Noto Serif CJK SC", "Noto Sans CJK SC", serif; color: #ee0817; white-space: nowrap; }
.n1 { left: 791px; top: 612px; }
.n2 { left: 1291px; top: 892px; }
.n3 { left: 1258px; top: 1123px; }
.wm text { font: italic 800 33px "Open Sans", sans-serif; fill: #00a2e9; }
```
